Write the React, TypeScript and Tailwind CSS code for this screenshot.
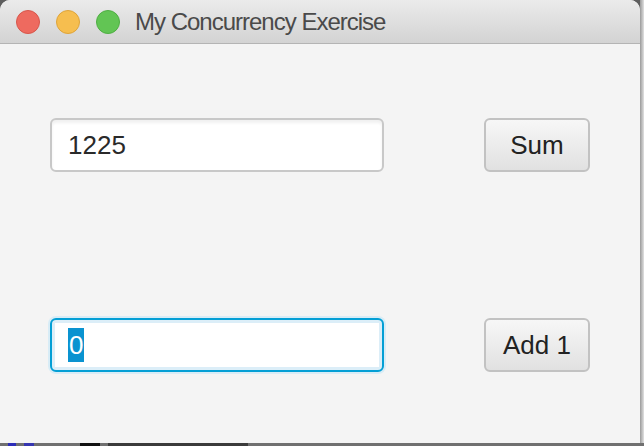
import React, { useState } from "react"

const font = { fontFamily: '"Liberation Sans", Arial, sans-serif' }

const TrafficLights = () => (
  <div className="flex items-center gap-4 pl-4">
    <span className="w-6 h-6 rounded-full bg-[#ee6a5f] border border-[#d7564b]" />
    <span className="w-6 h-6 rounded-full bg-[#f6be4f] border border-[#dea43a]" />
    <span className="w-6 h-6 rounded-full bg-[#62c554] border border-[#4fae43]" />
  </div>
)

const MacButton = ({ label }: { label: string }) => (
  <button className="w-[106px] h-[54px] rounded-[6px] border-2 border-[#c2c2c2] bg-gradient-to-b from-[#f7f7f7] to-[#e1e1e1] text-[26px] text-[#222]">
    {label}
  </button>
)

export default function App() {
  const [total] = useState("1225")

  return (
    <div style={font} className="w-[644px] h-[446px] bg-[#5e5e5e] overflow-hidden flex flex-col">
      <div className="flex h-[443px]">
        {/* window */}
        <div className="w-[640px] h-full flex flex-col bg-[#f4f4f4] rounded-t-[10px] overflow-hidden">
          <div className="h-[44px] shrink-0 flex items-center bg-gradient-to-b from-[#ebebeb] to-[#d3d3d3] border-b border-[#b4b4b4]">
            <TrafficLights />
            <span className="ml-[15px] text-[24px] text-[#4a4a4a] tracking-[-1px]">My Concurrency Exercise</span>
          </div>

          <div className="flex-1 flex flex-col pt-[74px] px-[50px] gap-[146px]">
            <div className="flex items-center justify-between">
              <div className="w-[334px] h-[54px] rounded-[6px] border-2 border-[#c8c8c8] bg-white flex items-center pl-[16px] shadow-[inset_0_3px_3px_rgba(0,0,0,0.06)]">
                <span className="text-[26px] text-[#2a2a2a]">{total}</span>
              </div>
              <MacButton label="Sum" />
            </div>

            <div className="flex items-center justify-between">
              <div className="w-[334px] h-[54px] rounded-[6px] border-2 border-[#049fd5] bg-[#dceef8] p-[3px] shadow-[0_0_0_2px_#d8ecf6]">
                <div className="h-full bg-white flex items-center pl-[13px]">
                  <span className="text-[26px] leading-[34px] text-white bg-[#0a93d0] px-px">0</span>
                </div>
              </div>
              <MacButton label="Add 1" />
            </div>
          </div>
        </div>
        {/* shadow to the right */}
        <div className="w-[4px] h-full bg-gradient-to-r from-[#9a9a9a] to-[#e2e2e2]" />
      </div>
      <div className="h-[3px] bg-[#707070] flex gap-2 pl-2">
        <span className="w-[8px] bg-[#2c2cb8]" />
        <span className="w-[10px] bg-[#3636b0]" />
        <span className="w-[30px] bg-[#707070]" />
        <span className="w-[20px] bg-[#111]" />
        <span className="w-[140px] bg-[#3a3a3a]" />
      </div>
    </div>
  )
}
